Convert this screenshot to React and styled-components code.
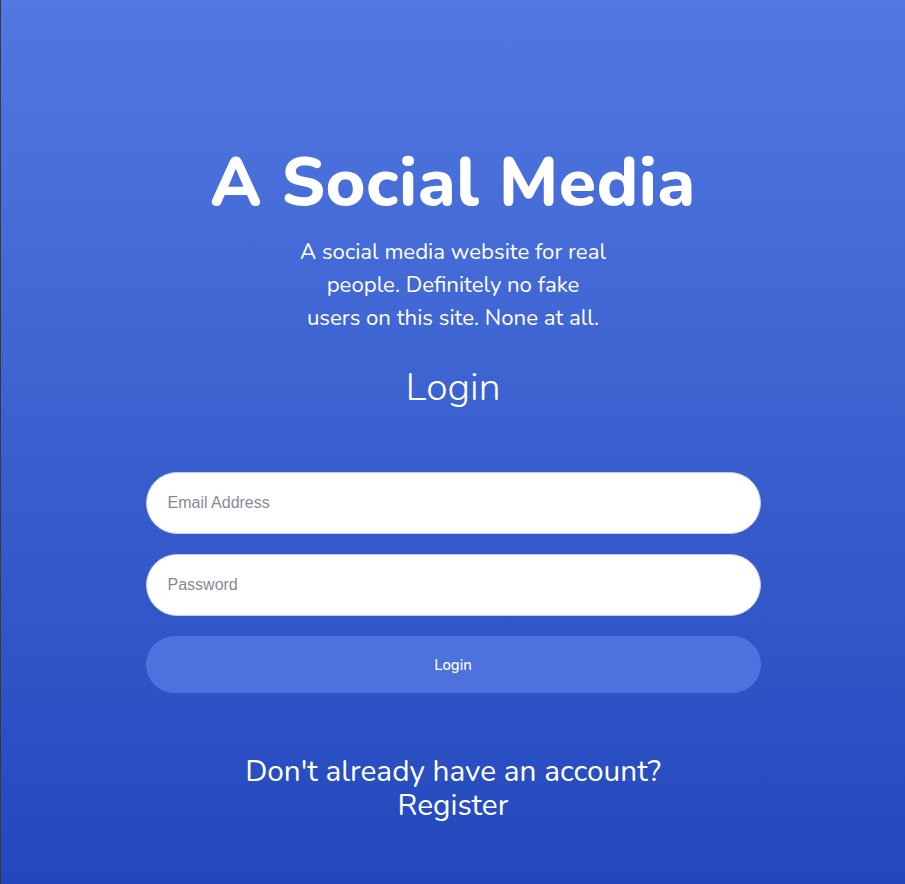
import React from "react";
import styled, { createGlobalStyle } from "styled-components";

const Global = createGlobalStyle`
  html, body { margin: 0; padding: 0; height: 100%; }
  body { font-family: "Nunito", "Lato", "Noto Sans", sans-serif; }
  #root { min-height: 100%; }
`;

const Page = styled.main`
  box-sizing: border-box;
  min-height: 884px;
  border-left: 1px solid #3a3a3a;
  background: linear-gradient(180deg, #5178e1 0%, #2348bd 100%);
  color: #fff;
  display: flex;
  flex-direction: column;
  align-items: center;
  padding-top: 142px;
`;

const Title = styled.h1`
  margin: 0;
  font-size: 68px;
  font-weight: 800;
  line-height: 82px;
  letter-spacing: 0.5px;
`;

const Tagline = styled.p`
  margin: 12px 0 0;
  width: 308px;
  text-align: center;
  font-size: 22.2px;
  line-height: 33px;
  font-weight: 400;
`;

const Heading = styled.h2`
  margin: 29px 0 0;
  font-size: 39px;
  font-weight: 300;
  line-height: 48px;
`;

const Form = styled.form`
  margin-top: 60px;
  width: 615px;
  display: flex;
  flex-direction: column;
  gap: 20px;
`;

const Input = styled.input`
  box-sizing: border-box;
  height: 62px;
  width: 100%;
  border-radius: 31px;
  border: 1px solid #c8cbd6;
  background: #fff;
  padding: 0 21px;
  font-family: "Liberation Sans", Arial, sans-serif;
  font-size: 16px;
  color: #333;
  outline: none;
  &::placeholder { color: #878a96; }
`;

const Button = styled.button`
  height: 57px;
  border: none;
  border-radius: 29px;
  background: #4d72dd;
  color: #fff;
  font-family: "Nunito", "Lato", sans-serif;
  font-size: 15px;
  font-weight: 500;
  cursor: pointer;
`;

const Footer = styled.p`
  margin: 62px 0 0;
  text-align: center;
  font-size: 29.8px;
  line-height: 34px;
`;

const RegisterLink = styled.a`
  color: #fff;
  text-decoration: none;
`;

export default function App() {
  return (
    <>
      <Global />
      <Page>
        <Title>A Social Media</Title>
        <Tagline>
          A social media website for real people. Definitely no fake users on this site. None at all.
        </Tagline>
        <Heading>Login</Heading>
        <Form onSubmit={(e) => e.preventDefault()}>
          <Input type="email" placeholder="Email Address" />
          <Input type="password" placeholder="Password" />
          <Button type="submit">Login</Button>
        </Form>
        <Footer>
          Don't already have an account?
          <br />
          <RegisterLink href="#">Register</RegisterLink>
        </Footer>
      </Page>
    </>
  );
}
